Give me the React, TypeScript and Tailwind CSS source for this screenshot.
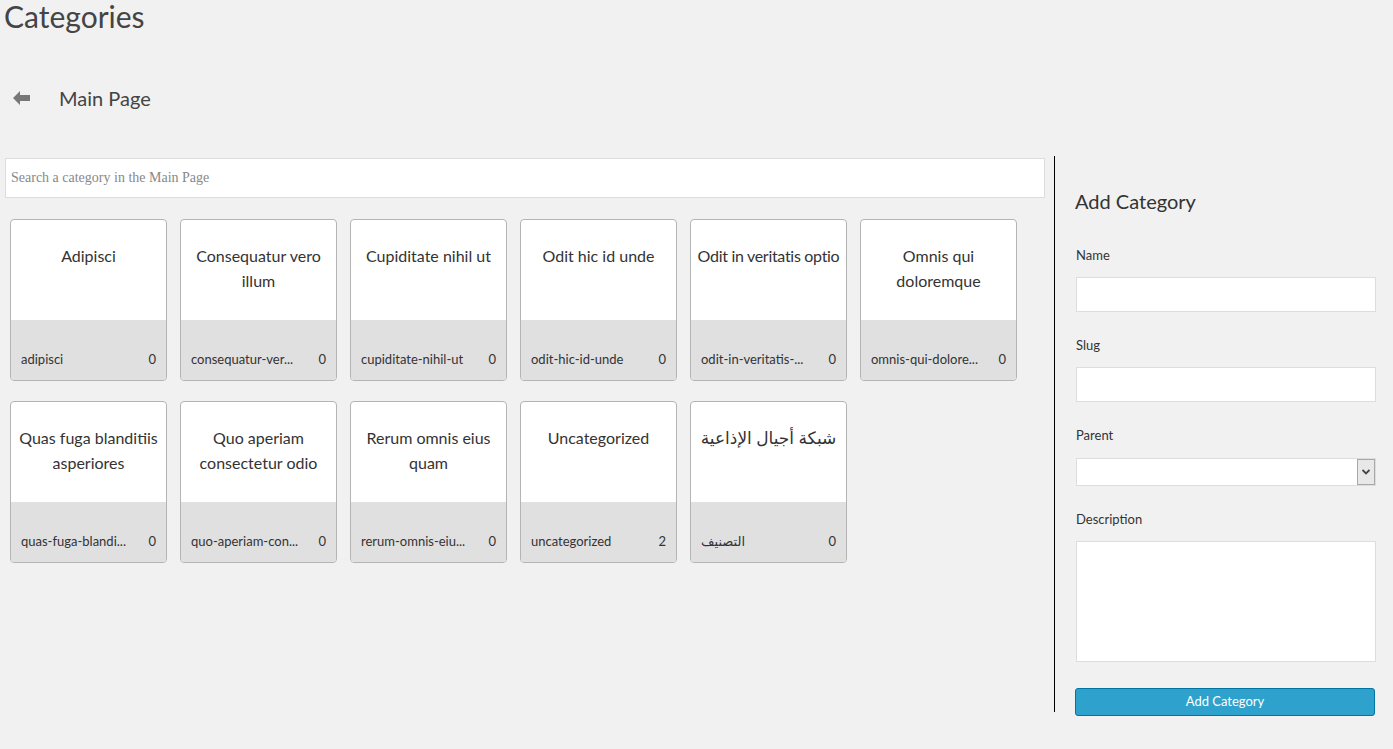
import React from "react";

type Category = { name: string; slug: string; count: number; rtl?: boolean; tight?: boolean };

const CATEGORIES: Category[] = [
  { name: "Adipisci", slug: "adipisci", count: 0 },
  { name: "Consequatur vero illum", slug: "consequatur-ver...", count: 0 },
  { name: "Cupiditate nihil ut", slug: "cupiditate-nihil-ut", count: 0 },
  { name: "Odit hic id unde", slug: "odit-hic-id-unde", count: 0 },
  { name: "Odit in veritatis optio", slug: "odit-in-veritatis-...", count: 0, tight: true },
  { name: "Omnis qui doloremque", slug: "omnis-qui-dolore...", count: 0 },
  { name: "Quas fuga blanditiis asperiores", slug: "quas-fuga-blandi...", count: 0 },
  { name: "Quo aperiam consectetur odio", slug: "quo-aperiam-con...", count: 0 },
  { name: "Rerum omnis eius quam", slug: "rerum-omnis-eiu...", count: 0 },
  { name: "Uncategorized", slug: "uncategorized", count: 2 },
  { name: "شبكة أجيال الإذاعية", slug: "التصنيف", count: 0, rtl: true },
];

const CategoryCard: React.FC<{ cat: Category }> = ({ cat }) => (
  <div className="w-[157px] h-[162px] flex flex-col border border-[#b4b4b4] rounded-[4px] overflow-hidden bg-white">
    <div
      className={
        cat.tight
          ? "h-[100px] pt-[23px] text-center text-[16px] leading-[25px] text-[#333] whitespace-nowrap tracking-[-0.3px]"
          : cat.rtl
            ? "h-[100px] px-[8px] pt-[23px] text-center text-[17px] leading-[25px] text-[#333]"
            : "h-[100px] px-[8px] pt-[23px] text-center text-[16px] leading-[25px] text-[#333]"
      }
      dir={cat.rtl ? "rtl" : undefined}
    >
      {cat.name}
    </div>
    <div className="flex-1 bg-[#e0e0e0] flex items-end justify-between px-[10px] pb-[12px] text-[13px] leading-[18px] text-[#333]">
      <span dir={cat.rtl ? "rtl" : undefined}>{cat.slug}</span>
      <span>{cat.count}</span>
    </div>
  </div>
);

const Field: React.FC<{ label: string; children: React.ReactNode }> = ({ label, children }) => (
  <div className="flex flex-col">
    <label className="text-[13px] leading-[18px] text-[#333] mb-[13px]">{label}</label>
    {children}
  </div>
);

export default function App() {
  return (
    <div className="min-h-screen bg-[#f1f1f1] text-[#333] font-['Lato','Noto_Sans','DejaVu_Sans',sans-serif]">
      <h1 className="pl-[4px] text-[30px] leading-[32px] text-[#444] font-normal">Categories</h1>

      {/* ── Breadcrumb ─────────────────────────────── */}
      <div className="mt-[54px] flex items-center h-[24px] pl-[13px]">
        <svg width="18" height="14" viewBox="0 0 18 14" aria-hidden="true">
          <path d="M0 7 L7 0 L7 4 L17 4 L17 10 L7 10 L7 14 Z" fill="#777" />
        </svg>
        <span className="ml-[28px] text-[20px] text-[#444]">Main Page</span>
      </div>

      <div className="mt-[46px] flex items-start">
        {/* ── Category list ─────────────────────────── */}
        <div className="ml-[5px] w-[1040px] pt-[2px]">
          <input
            type="text"
            placeholder="Search a category in the Main Page"
            className="w-full h-[40px] bg-white border border-[#ddd] px-[5px] text-[14px] font-['Liberation_Serif',serif] placeholder:text-[#888] outline-none"
          />
          <div className="mt-[21px] ml-[5px] grid grid-cols-[repeat(6,157px)] gap-x-[13px] gap-y-[20px]">
            {CATEGORIES.map((cat) => (
              <CategoryCard key={cat.name} cat={cat} />
            ))}
          </div>
        </div>

        {/* ── Add category form ─────────────────────── */}
        <div className="ml-[9px] h-[556px] border-l border-black pl-[20px] w-[322px] pt-[33px]">
          <h2 className="text-[20px] leading-[24px] text-[#333]">Add Category</h2>
          <div className="mt-[33px] flex flex-col gap-[24px] pl-[1px]">
            <Field label="Name">
              <input className="h-[35px] bg-white border border-[#ddd] outline-none" />
            </Field>
            <Field label="Slug">
              <input className="h-[35px] bg-white border border-[#ddd] outline-none" />
            </Field>
            <Field label="Parent">
              <div className="relative h-[28px] mt-[1px] bg-white border border-[#ddd]">
                <div className="absolute right-0 top-0 h-full w-[18px] bg-[#e8e8e8] border border-[#a8a8a8] flex items-center justify-center">
                  <svg width="8" height="6" viewBox="0 0 8 6" aria-hidden="true">
                    <path d="M0.5 1 L4 4.5 L7.5 1" stroke="#444" strokeWidth="1.8" fill="none" />
                  </svg>
                </div>
              </div>
            </Field>
            <Field label="Description">
              <textarea className="h-[121px] bg-white border border-[#ddd] outline-none resize-none" />
            </Field>
          </div>
          <button className="mt-[26px] w-[300px] h-[28px] bg-[#2ea2cc] border border-[#0074a2] rounded-[3px] text-white text-[13px]">
            Add Category
          </button>
        </div>
      </div>
    </div>
  );
}
